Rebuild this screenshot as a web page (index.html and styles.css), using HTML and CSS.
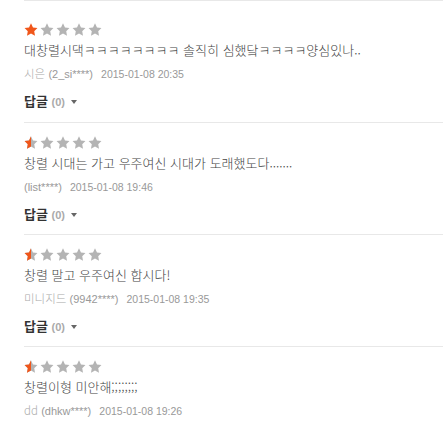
FILE: index.html
```html
<!DOCTYPE html>
<html lang="ko">
<head>
<meta charset="utf-8">
<link rel="stylesheet" href="styles.css">
</head>
<body>
<ul class="reviews">
  <li class="review first">
    <div class="stars">
      <svg class="star" viewBox="0 0 24 23"><path class="on" d="M12 .6l3.5 7.2 7.9 1.1-5.7 5.6 1.4 7.9L12 18.7l-7.1 3.7 1.4-7.9L.6 8.9l7.9-1.1z"/></svg>
      <svg class="star" viewBox="0 0 24 23"><path class="off" d="M12 .6l3.5 7.2 7.9 1.1-5.7 5.6 1.4 7.9L12 18.7l-7.1 3.7 1.4-7.9L.6 8.9l7.9-1.1z"/></svg>
      <svg class="star" viewBox="0 0 24 23"><path class="off" d="M12 .6l3.5 7.2 7.9 1.1-5.7 5.6 1.4 7.9L12 18.7l-7.1 3.7 1.4-7.9L.6 8.9l7.9-1.1z"/></svg>
      <svg class="star" viewBox="0 0 24 23"><path class="off" d="M12 .6l3.5 7.2 7.9 1.1-5.7 5.6 1.4 7.9L12 18.7l-7.1 3.7 1.4-7.9L.6 8.9l7.9-1.1z"/></svg>
      <svg class="star" viewBox="0 0 24 23"><path class="off" d="M12 .6l3.5 7.2 7.9 1.1-5.7 5.6 1.4 7.9L12 18.7l-7.1 3.7 1.4-7.9L.6 8.9l7.9-1.1z"/></svg>
    </div>
    <p class="text">대창렬시댁ㅋㅋㅋㅋㅋㅋㅋㅋ 솔직히 심했닼ㅋㅋㅋㅋ양심있나..</p>
    <p class="meta"><span class="name">시은</span> <span class="uid">(2_si****)</span><span class="date">2015-01-08 20:35</span></p>
    <p class="reply">답글 <span class="count">(0)</span><span class="caret"></span></p>
  </li>
  <li class="review">
    <div class="stars">
      <svg class="star" viewBox="0 0 24 23"><defs><clipPath id="h1"><rect x="0" y="0" width="12" height="23"/></clipPath></defs><path class="off" d="M12 .6l3.5 7.2 7.9 1.1-5.7 5.6 1.4 7.9L12 18.7l-7.1 3.7 1.4-7.9L.6 8.9l7.9-1.1z"/><path class="on" clip-path="url(#h1)" d="M12 .6l3.5 7.2 7.9 1.1-5.7 5.6 1.4 7.9L12 18.7l-7.1 3.7 1.4-7.9L.6 8.9l7.9-1.1z"/></svg>
      <svg class="star" viewBox="0 0 24 23"><path class="off" d="M12 .6l3.5 7.2 7.9 1.1-5.7 5.6 1.4 7.9L12 18.7l-7.1 3.7 1.4-7.9L.6 8.9l7.9-1.1z"/></svg>
      <svg class="star" viewBox="0 0 24 23"><path class="off" d="M12 .6l3.5 7.2 7.9 1.1-5.7 5.6 1.4 7.9L12 18.7l-7.1 3.7 1.4-7.9L.6 8.9l7.9-1.1z"/></svg>
      <svg class="star" viewBox="0 0 24 23"><path class="off" d="M12 .6l3.5 7.2 7.9 1.1-5.7 5.6 1.4 7.9L12 18.7l-7.1 3.7 1.4-7.9L.6 8.9l7.9-1.1z"/></svg>
      <svg class="star" viewBox="0 0 24 23"><path class="off" d="M12 .6l3.5 7.2 7.9 1.1-5.7 5.6 1.4 7.9L12 18.7l-7.1 3.7 1.4-7.9L.6 8.9l7.9-1.1z"/></svg>
    </div>
    <p class="text">창렬 시대는 가고 우주여신 시대가 도래했도다.......</p>
    <p class="meta"><span class="name"></span> <span class="uid">(list****)</span><span class="date">2015-01-08 19:46</span></p>
    <p class="reply">답글 <span class="count">(0)</span><span class="caret"></span></p>
  </li>
  <li class="review">
    <div class="stars">
      <svg class="star" viewBox="0 0 24 23"><defs><clipPath id="h2"><rect x="0" y="0" width="12" height="23"/></clipPath></defs><path class="off" d="M12 .6l3.5 7.2 7.9 1.1-5.7 5.6 1.4 7.9L12 18.7l-7.1 3.7 1.4-7.9L.6 8.9l7.9-1.1z"/><path class="on" clip-path="url(#h2)" d="M12 .6l3.5 7.2 7.9 1.1-5.7 5.6 1.4 7.9L12 18.7l-7.1 3.7 1.4-7.9L.6 8.9l7.9-1.1z"/></svg>
      <svg class="star" viewBox="0 0 24 23"><path class="off" d="M12 .6l3.5 7.2 7.9 1.1-5.7 5.6 1.4 7.9L12 18.7l-7.1 3.7 1.4-7.9L.6 8.9l7.9-1.1z"/></svg>
      <svg class="star" viewBox="0 0 24 23"><path class="off" d="M12 .6l3.5 7.2 7.9 1.1-5.7 5.6 1.4 7.9L12 18.7l-7.1 3.7 1.4-7.9L.6 8.9l7.9-1.1z"/></svg>
      <svg class="star" viewBox="0 0 24 23"><path class="off" d="M12 .6l3.5 7.2 7.9 1.1-5.7 5.6 1.4 7.9L12 18.7l-7.1 3.7 1.4-7.9L.6 8.9l7.9-1.1z"/></svg>
      <svg class="star" viewBox="0 0 24 23"><path class="off" d="M12 .6l3.5 7.2 7.9 1.1-5.7 5.6 1.4 7.9L12 18.7l-7.1 3.7 1.4-7.9L.6 8.9l7.9-1.1z"/></svg>
    </div>
    <p class="text">창렬 말고 우주여신 합시다!</p>
    <p class="meta"><span class="name">미니지드</span> <span class="uid">(9942****)</span><span class="date">2015-01-08 19:35</span></p>
    <p class="reply">답글 <span class="count">(0)</span><span class="caret"></span></p>
  </li>
  <li class="review">
    <div class="stars">
      <svg class="star" viewBox="0 0 24 23"><defs><clipPath id="h3"><rect x="0" y="0" width="12" height="23"/></clipPath></defs><path class="off" d="M12 .6l3.5 7.2 7.9 1.1-5.7 5.6 1.4 7.9L12 18.7l-7.1 3.7 1.4-7.9L.6 8.9l7.9-1.1z"/><path class="on" clip-path="url(#h3)" d="M12 .6l3.5 7.2 7.9 1.1-5.7 5.6 1.4 7.9L12 18.7l-7.1 3.7 1.4-7.9L.6 8.9l7.9-1.1z"/></svg>
      <svg class="star" viewBox="0 0 24 23"><path class="off" d="M12 .6l3.5 7.2 7.9 1.1-5.7 5.6 1.4 7.9L12 18.7l-7.1 3.7 1.4-7.9L.6 8.9l7.9-1.1z"/></svg>
      <svg class="star" viewBox="0 0 24 23"><path class="off" d="M12 .6l3.5 7.2 7.9 1.1-5.7 5.6 1.4 7.9L12 18.7l-7.1 3.7 1.4-7.9L.6 8.9l7.9-1.1z"/></svg>
      <svg class="star" viewBox="0 0 24 23"><path class="off" d="M12 .6l3.5 7.2 7.9 1.1-5.7 5.6 1.4 7.9L12 18.7l-7.1 3.7 1.4-7.9L.6 8.9l7.9-1.1z"/></svg>
      <svg class="star" viewBox="0 0 24 23"><path class="off" d="M12 .6l3.5 7.2 7.9 1.1-5.7 5.6 1.4 7.9L12 18.7l-7.1 3.7 1.4-7.9L.6 8.9l7.9-1.1z"/></svg>
    </div>
    <p class="text">창렬이형 미안해;;;;;;;;</p>
    <p class="meta"><span class="name">dd</span> <span class="uid">(dhkw****)</span><span class="date">2015-01-08 19:26</span></p>
  </li>
</ul>
</body>
</html>
```

FILE: styles.css
```css
html, body {
  margin: 0;
  padding: 0;
  background: #fff;
}
body {
  font-family: "Noto Sans CJK KR", "Noto Sans", sans-serif;
  color: #333;
  overflow: hidden;
}
.reviews {
  list-style: none;
  margin: 0;
  padding: 0 0 0 24px;
}
.review {
  border-top: 1px solid #e8e8e8;
  padding: 13px 0 10px;
}
.review.first {
  padding-top: 22px;
  padding-bottom: 11px;
}
.stars {
  display: flex;
  gap: 2px;
  height: 13px;
}
.star {
  width: 14px;
  height: 13px;
  display: block;
}
.star .on { fill: #f0561a; }
.star .off { fill: #b4b4b4; }
.text {
  margin: 5px 0 0;
  height: 18px;
  font-size: 13px;
  font-weight: 300;
  line-height: 18px;
  color: #444;
}
.meta {
  margin: 5px 0 0;
  height: 18px;
  font-size: 11.5px;
  font-weight: 300;
  line-height: 18px;
  color: #aaa;
}
.name {
  color: #aaa;
}
.uid {
  font-family: "Liberation Sans", Arial, sans-serif;
  font-size: 11px;
  line-height: 1;
  color: #999;
}
.date {
  font-family: "Liberation Sans", Arial, sans-serif;
  font-size: 10.5px;
  line-height: 1;
  color: #999;
  margin-left: 8px;
}
.reply {
  margin: 9px 0 0;
  height: 20px;
  font-size: 13px;
  line-height: 20px;
  font-weight: bold;
  color: #333;
}
.count {
  font-family: "Liberation Sans", Arial, sans-serif;
  font-size: 11px;
  line-height: 1;
  font-weight: bold;
  color: #aaa;
}
.caret {
  display: inline-block;
  width: 0;
  height: 0;
  margin-left: 6px;
  vertical-align: 2px;
  border-left: 3.5px solid transparent;
  border-right: 3.5px solid transparent;
  border-top: 4px solid #666;
}
```
